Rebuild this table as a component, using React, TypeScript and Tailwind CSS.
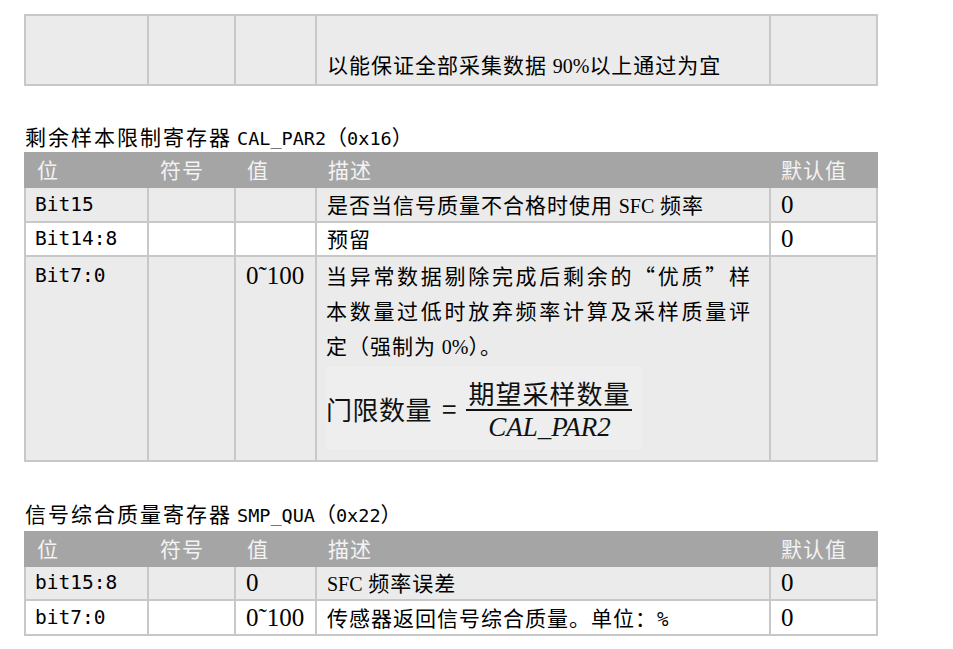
import React from 'react';

const ZH = "font-['Noto_Sans_CJK_SC',sans-serif]";
const MONO = "font-['DejaVu_Sans_Mono','Noto_Sans_CJK_SC',monospace]";
const SERIF = "font-['Liberation_Serif','Noto_Sans_CJK_SC',serif]";

const COLS = 'grid w-[854px] grid-cols-[123px_87px_81px_454px_109px]';

function Cell({ last, top, bg, className = '', children }: {
  last?: boolean; top?: boolean; bg: string; className?: string; children?: React.ReactNode;
}) {
  return (
    <div
      className={`border-l-2 border-b-2 border-[#c8c8c8] pl-[10px] ${last ? 'border-r-2' : ''} ${top ? 'border-t-2' : ''} ${bg} ${className}`}
    >
      {children}
    </div>
  );
}

function Header() {
  return (
    <div className={`${COLS} h-[36px] bg-[#a5a5a5] text-[#f3f3f3] text-[21px] tracking-[1px] ${ZH}`}>
      {['位', '符号', '值', '描述', '默认值'].map((h, i) => (
        <div key={h} className={`flex items-center ${i === 4 ? 'pl-[12px]' : 'pl-[13px]'}`}>{h}</div>
      ))}
    </div>
  );
}

function Title({ zh, code, addr, className }: { zh: string; code: string; addr: string; className: string }) {
  return (
    <div className={`${className} h-[31px] leading-[30px] pl-[1px] text-black whitespace-nowrap`}>
      <span className={`${ZH} text-[21px] tracking-[2px]`}>{zh}</span>
      <span className={`${MONO} text-[18.5px] ml-[5px]`}>{code}</span>
      <span className={`${ZH} text-[21px]`}>（</span>
      <span className={`${MONO} text-[18.5px]`}>{addr}</span>
      <span className={`${ZH} text-[21px]`}>）</span>
    </div>
  );
}

function Row({ bg, h, bit, val, desc, def }: {
  bg: string; h: string; bit: string; val?: React.ReactNode; desc: React.ReactNode; def?: React.ReactNode;
}) {
  const line = `${h} flex items-center`;
  return (
    <div className={`${COLS} text-black`}>
      <Cell bg={bg} className={`${line} !pl-[9px] ${MONO} text-[19.5px]`}>{bit}</Cell>
      <Cell bg={bg} className={line} />
      <Cell bg={bg} className={`${line} ${SERIF} text-[25px]`}>{val}</Cell>
      <Cell bg={bg} className={`${line} ${ZH} text-[21px] tracking-[1px]`}>
        <span className="whitespace-pre">{desc}</span>
      </Cell>
      <Cell bg={bg} last className={`${line} ${SERIF} text-[25px]`}>{def}</Cell>
    </div>
  );
}

const GRAY = 'bg-[#ebebeb]';
const WHITE = 'bg-white';

export default function App() {
  return (
    <div className="w-[953px] h-[649px] bg-white overflow-hidden pt-[14px] pl-[24px]">
      {/* tail of previous table */}
      <div className={`${COLS} h-[70px] text-black`}>
        <Cell top bg={GRAY} />
        <Cell top bg={GRAY} />
        <Cell top bg={GRAY} />
        <Cell top bg={GRAY} className={`pt-[31px] leading-[35px] ${ZH} text-[21px] tracking-[1px] whitespace-nowrap`}>
          以能保证全部采集数据 <span className={`${SERIF} text-[20px] tracking-normal`}>90%</span>以上通过为宜
        </Cell>
        <Cell top last bg={GRAY} />
      </div>

      <Title className="mt-[37px]" zh="剩余样本限制寄存器" code="CAL_PAR2" addr="0x16" />
      <Header />
      <Row bg={GRAY} h="h-[35px]" bit="Bit15"
        desc={<>是否当信号质量不合格时使用 <span className={`${SERIF} text-[20px] tracking-normal`}>SFC</span> 频率</>}
        def="0" />
      <Row bg={WHITE} h="h-[34px]" bit="Bit14:8" desc="预留" def="0" />

      {/* Bit7:0 row with formula */}
      <div className={`${COLS} h-[205px] text-black`}>
        <Cell bg={GRAY} className={`!pl-[9px] pt-[1px] leading-[35px] ${MONO} text-[19.5px]`}>Bit7:0</Cell>
        <Cell bg={GRAY} />
        <Cell bg={GRAY} className={`pt-[1px] leading-[35px] ${SERIF} text-[25px] whitespace-nowrap`}>0˜100</Cell>
        <Cell bg={GRAY} className={`pt-[1px] !pl-[9px] ${ZH} text-[21px] whitespace-nowrap`}>
          <div className="leading-[35px] tracking-[2.7px]">当异常数据剔除完成后剩余的“优质”样</div>
          <div className="leading-[35px] tracking-[2.7px]">本数量过低时放弃频率计算及采样质量评</div>
          <div className="leading-[35px] tracking-[1px]">
            定（强制为 <span className={`${SERIF} text-[20px] tracking-normal`}>0%</span>）。
          </div>
          <div className="mt-[2px] flex items-center w-[316px] h-[82px] bg-[#eeeeee] text-[26px] text-[#111]">
            <span className="tracking-[0.5px]">门限数量</span>
            <span className="ml-[10px] mr-[10px] text-[26px] leading-none">=</span>
            <div className="flex flex-col items-center w-[166px] pt-[4px]">
              <span className="leading-[32px] tracking-[1px]">期望采样数量</span>
              <div className="h-[2px] w-full bg-[#111]" />
              <span className={`${SERIF} italic text-[27px] leading-[32px]`}>CAL_PAR2</span>
            </div>
          </div>
        </Cell>
        <Cell bg={GRAY} last />
      </div>

      <Title className="mt-[36px] mb-[2px]" zh="信号综合质量寄存器" code="SMP_QUA" addr="0x22" />
      <Header />
      <Row bg={GRAY} h="h-[34px]" bit="bit15:8" val="0"
        desc={<><span className={`${SERIF} text-[20px] tracking-normal`}>SFC</span> 频率误差</>}
        def="0" />
      <Row bg={WHITE} h="h-[35px]" bit="bit7:0" val="0˜100"
        desc={<>传感器返回信号综合质量。单位：<span className={`${MONO} text-[19px]`}>%</span></>}
        def="0" />
    </div>
  );
}
